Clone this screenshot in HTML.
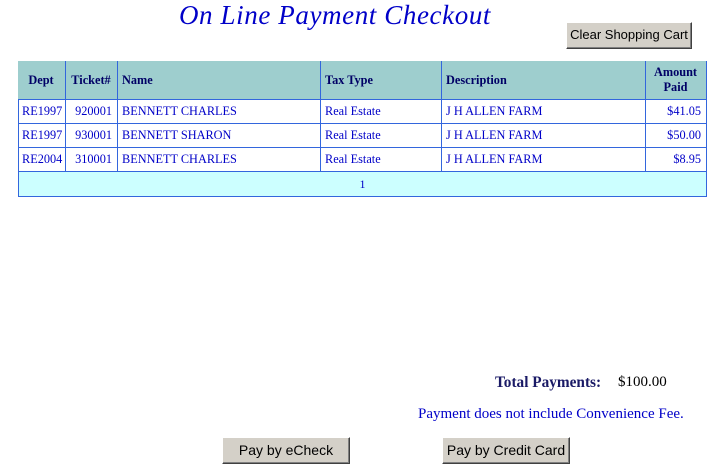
<!DOCTYPE html>
<html><head><style>
body{margin:0;width:722px;height:473px;background:#fff;position:relative;overflow:hidden;font-family:"Liberation Serif",serif;}
.a{position:absolute;white-space:nowrap}
.title{left:0;width:670px;text-align:center;top:0px;font-size:27px;font-style:italic;color:#0000c8;letter-spacing:0.6px;}
.btn{position:absolute;background:#d4d0c8;border:1px solid;border-color:#fff #404040 #404040 #fff;box-shadow:inset -1px -1px 0 #808080;font-family:"Liberation Sans",sans-serif;font-size:14px;color:#000;text-align:center;box-sizing:border-box;line-height:24px;white-space:nowrap;overflow:hidden;}
.c{position:absolute;box-sizing:border-box;border-right:1px solid #3366dd;border-bottom:1px solid #3366dd;font-size:12px;color:#0000c8;white-space:nowrap;}
.h{background:#9ecece;color:#000066;font-weight:bold;}
</style></head><body>
<div class="a title">On Line Payment Checkout</div>
<div class="btn" style="left:566px;top:22px;width:126px;height:27px;font-size:13px;">Clear Shopping Cart</div>
<div class="a" style="left:18px;top:61px;width:689px;height:136px;border-left:1px solid #3366dd;border-top:1px solid #3366dd;box-sizing:border-box;"></div>
<div id="t"></div>
<script>
var xs=[18,66,118,321,442,646,707];
var ys=[61,100,124,148,172];
var hd=['Dept','Ticket#','Name','Tax Type','Description','Amount<br>Paid'];
var al=['c','c','l','l','l','c'];
var rows=[['RE1997','920001','BENNETT CHARLES','Real Estate','J H ALLEN FARM','$41.05'],['RE1997','930001','BENNETT SHARON','Real Estate','J H ALLEN FARM','$50.00'],['RE2004','310001','BENNETT CHARLES','Real Estate','J H ALLEN FARM','$8.95']];
var ral=['l','r','l','l','l','r'];
var h='';
function cell(x0,x1,y0,y1,txt,a,cls){
var ta=a=='c'?'center':a=='r'?'right':'left';
h+='<div class="c '+cls+'" style="left:'+(x0+1)+'px;top:'+(y0+1)+'px;width:'+(x1-x0)+'px;height:'+(y1-y0)+'px;text-align:'+ta+';padding:0 5px 0 4px;display:flex;align-items:center;justify-content:'+(a=='c'?'center':a=='r'?'flex-end':'flex-start')+';line-height:15px;font-size:12.3px;">'+(cls?'<span style="text-align:center">'+txt+'</span>':txt)+'</div>';
}
for(var i=0;i<6;i++)cell(xs[i]-1,xs[i+1]-1,ys[0]-1,ys[1]-1,hd[i],al[i],'h');
for(var r=0;r<3;r++)for(var i=0;i<6;i++)cell(xs[i]-1,xs[i+1]-1,ys[r+1]-1,ys[r+2]-1,rows[r][i],ral[i],'');
h+='<div class="c" style="left:19px;top:172px;width:688px;height:25px;background:#ccffff;text-align:center;line-height:24px;">1</div>';
document.getElementById('t').innerHTML=h;
</script>
<div class="a" style="left:495px;top:374px;font-size:15.3px;font-weight:bold;color:#1a1a66;">Total Payments:</div>
<div class="a" style="left:618px;top:374px;font-size:15px;color:#000;">$100.00</div>
<div class="a" style="left:418px;top:406px;font-size:15px;color:#0000c8;">Payment does not include Convenience Fee.</div>
<div class="btn" style="left:222px;top:437px;width:128px;height:27px;">Pay by eCheck</div>
<div class="btn" style="left:442px;top:437px;width:128px;height:27px;">Pay by Credit Card</div>
</body></html>
